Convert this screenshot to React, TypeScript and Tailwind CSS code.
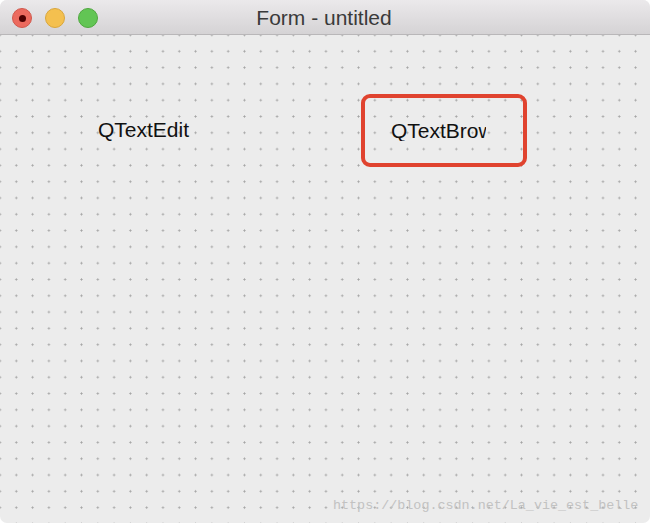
export default function App() {
  return (
    <div className="w-[650px] h-[523px] bg-white">
      <div className="w-full h-full flex flex-col rounded-[7px] overflow-hidden bg-[#ececec] font-['Liberation_Sans',Arial,sans-serif]">
        {/* title bar */}
        <div className="relative h-[35px] shrink-0 flex items-center justify-center bg-gradient-to-b from-[#ebe9eb] to-[#d5d3d5] border-b border-[#b9b7b9]">
          <div className="absolute left-[12px] top-[8px] flex gap-[13px]">
            <div className="w-[20px] h-[20px] rounded-full bg-[#ec6a5e] border border-[#d1584c] flex items-center justify-center">
              <div className="w-[7px] h-[7px] rounded-full bg-[#4d0000]" />
            </div>
            <div className="w-[20px] h-[20px] rounded-full bg-[#f4c04f] border border-[#d9a63c]" />
            <div className="w-[20px] h-[20px] rounded-full bg-[#62c554] border border-[#4fa73f]" />
          </div>
          <span className="text-[21px] text-[#3a3a3a] leading-none mt-[1px] ml-[-2px]">Form - untitled</span>
        </div>

        {/* form canvas */}
        <div className="flex-1 relative bg-[radial-gradient(circle,#a3a3a3_0.8px,transparent_1.3px)] bg-[size:16.3px_16.3px] bg-[position:-8.15px_-8.15px]">
          <div className="flex items-start pt-[59px] pl-[98px]">
            <div className="w-[263px] mt-[25px] text-[21px] leading-none text-[#111]">QTextEdit</div>
            <div className="w-[166px] h-[73px] border-[4px] border-[#e0432f] rounded-[9px] flex items-center">
              <div className="ml-[26px] w-[95px] overflow-hidden whitespace-nowrap text-[21px] leading-none text-[#111]">QTextBrowser</div>
            </div>
          </div>
          <div className="absolute left-[333px] top-[464px] text-[13.4px] leading-none text-[#c2c2c2] font-['Liberation_Mono',monospace] whitespace-nowrap">
            https://blog.csdn.net/La_vie_est_belle
          </div>
        </div>
      </div>
    </div>
  );
}
